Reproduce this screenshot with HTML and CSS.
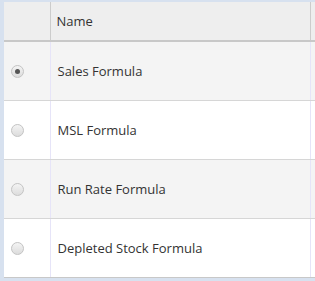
FILE: index.html
```html
<!DOCTYPE html>
<html>
<head>
  <title>Formulas</title>
  <link rel="stylesheet" href="styles.css">
</head>
<body>
  <div class="grid-wrap">
    <table class="grid">
      <colgroup>
        <col class="col-select">
        <col class="col-name">
        <col class="col-extra">
      </colgroup>
      <thead>
        <tr>
          <th></th>
          <th>Name</th>
          <th></th>
        </tr>
      </thead>
      <tbody>
        <tr class="alt">
          <td><span class="radio checked"></span></td>
          <td>Sales Formula</td>
          <td></td>
        </tr>
        <tr>
          <td><span class="radio"></span></td>
          <td>MSL Formula</td>
          <td></td>
        </tr>
        <tr class="alt">
          <td><span class="radio"></span></td>
          <td>Run Rate Formula</td>
          <td></td>
        </tr>
        <tr>
          <td><span class="radio"></span></td>
          <td>Depleted Stock Formula</td>
          <td></td>
        </tr>
      </tbody>
    </table>
  </div>
</body>
</html>
```

FILE: styles.css
```css
body {
  margin: 0;
  background: #d7e1ef;
  font-family: "Open Sans", Arial, sans-serif;
  font-size: 13px;
  color: #333;
  overflow: hidden;
}
.grid-wrap {
  margin: 2px 0 0 4px;
  width: 311px;
  overflow: hidden;
}
.grid {
  border-collapse: collapse;
  table-layout: fixed;
  width: 356px;
  border-bottom: 1px solid #c8c8c8;
}
.col-select {
  width: 46px;
}
.col-name {
  width: 260px;
}
.col-extra {
  width: 50px;
}
.grid th {
  height: 38px;
  background: #eeeeee;
  font-weight: normal;
  text-align: left;
  padding: 0 0 0 6px;
  border-right: 1px solid #cccccc;
  border-bottom: 2px solid #c8c8c8;
}
.grid td {
  height: 58px;
  padding: 0 0 0 7px;
  background: #fff;
  border-right: 1px solid #e6e4f8;
  border-bottom: 1px solid #d6d6d6;
}
.grid tr.alt td {
  background: #f4f4f4;
}
.grid tbody tr:last-child td {
  border-bottom: 1px solid #c8c8c8;
}
.radio {
  display: block;
  width: 11px;
  height: 11px;
  border: 1px solid #c4c4c4;
  border-radius: 50%;
  background: linear-gradient(#f4f4f4, #dcdcdc);
  position: relative;
}
.radio.checked::after {
  content: "";
  position: absolute;
  left: 3px;
  top: 3px;
  width: 5px;
  height: 5px;
  border-radius: 50%;
  background: #555;
}
```
